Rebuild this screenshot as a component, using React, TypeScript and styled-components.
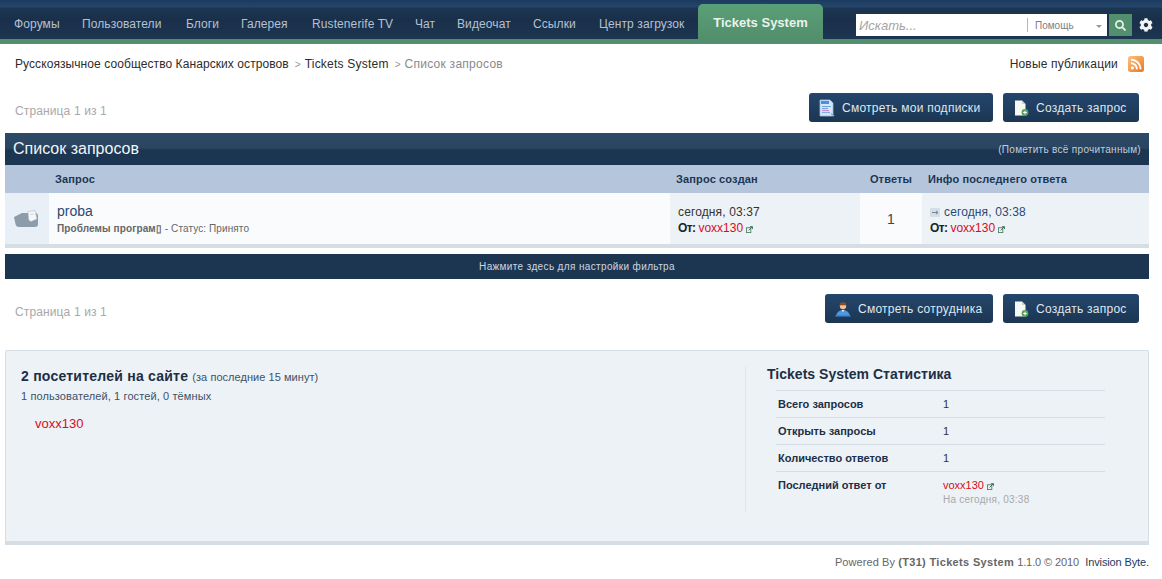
import { ReactNode } from 'react';
import styled, { createGlobalStyle } from 'styled-components';
import { FaCog, FaSearch } from 'react-icons/fa';

const GlobalStyle = createGlobalStyle`
  html, body {
    margin: 0;
    padding: 0;
    background: #fff;
    overflow: hidden;
  }
  body {
    font-family: "Liberation Sans", Arial, sans-serif;
    font-size: 12px;
    color: #333;
  }
`;

const navItems = [
  ['Форумы', 46],
  ['Пользователи', 82],
  ['Блоги', 33],
  ['Галерея', 49],
  ['Rustenerife TV', 81],
  ['Чат', 20],
  ['Видеочат', 54],
  ['Ссылки', 44],
  ['Центр загрузок', 87],
] as const;

const Header = styled.header`
  height: 39px;
  border-bottom: 5px solid #528f6c;
  background: linear-gradient(#1d3a5e 0, #24466d 7px, #1c3652 8px, #1a2f49 20px, #1c3652 39px);
  display: flex;
  align-items: flex-start;
`;

const Nav = styled.nav`
  display: flex;
  gap: 22px;
  padding: 17px 0 0 14px;
`;

const NavLink = styled.a<{ $width: number }>`
  width: ${p => p.$width}px;
  color: #b3c2d2;
  font-size: 12px;
  line-height: 14px;
  white-space: nowrap;
  letter-spacing: 0.1px;
`;

const ActiveTab = styled.a`
  margin: 4px 0 0 12px;
  width: 125px;
  height: 35px;
  box-sizing: border-box;
  padding-top: 11px;
  border-radius: 5px 5px 0 0;
  background: linear-gradient(#5a9f78, #528f6c);
  color: #e9f3ec;
  font-size: 13px;
  line-height: 15px;
  font-weight: bold;
  text-align: center;
`;

const SearchArea = styled.div`
  margin: 14px 0 0 33px;
  display: flex;
  align-items: center;
`;

const SearchBox = styled.div`
  width: 251px;
  height: 22px;
  background: #fff;
  display: flex;
  align-items: center;
  position: relative;
`;

const SearchHint = styled.span`
  flex: 1;
  padding-left: 3px;
  font-size: 13px;
  font-style: italic;
  color: #a4a4a4;
`;

const SearchScope = styled.span`
  width: 80px;
  height: 14px;
  border-left: 1px solid #b5b5b5;
  padding-left: 7px;
  box-sizing: border-box;
  font-size: 10px;
  line-height: 16px;
  color: #7d7d7d;
`;

const Caret = styled.i`
  position: absolute;
  right: 5px;
  top: 11px;
  border: 3px solid transparent;
  border-top: 3px solid #999;
  border-bottom: 0;
`;

const SearchButton = styled.button`
  width: 23px;
  height: 22px;
  margin-left: 2px;
  padding: 0;
  border: 0;
  background: #528f6c;
  color: #e6f0ea;
  display: flex;
  align-items: center;
  justify-content: center;
  font-size: 11px;
`;

const SettingsIcon = styled(FaCog)`
  margin-left: 7px;
  color: #f1f3f5;
  font-size: 14px;
`;

const Breadcrumb = styled.div`
  height: 40px;
  padding: 0 18px 0 15px;
  display: flex;
  align-items: center;
  font-size: 12px;
  color: #333;
`;

const Crumb = styled.span<{ $muted?: boolean; $spacing: number }>`
  color: ${p => (p.$muted ? '#8a8a8a' : '#2c2c2c')};
  letter-spacing: ${p => p.$spacing}px;
  margin-right: 3px;
`;

const Separator = styled.span`
  color: #999;
  font-size: 10px;
  margin: 0 4px 0 3px;
`;

const NewPosts = styled.a`
  margin-left: auto;
  color: #2c2c2c;
  letter-spacing: 0.18px;
  display: flex;
  align-items: center;
  gap: 10px;
`;

const ActionRow = styled.div<{ $top: number; $bottom: number }>`
  display: flex;
  align-items: center;
  padding: ${p => p.$top}px 23px ${p => p.$bottom}px 15px;
  gap: 10px;
`;

const PageInfo = styled.span`
  margin-right: auto;
  padding-top: 6px;
  color: #a8a8a8;
  font-size: 12px;
  letter-spacing: 0.13px;
`;

const ActionButton = styled.a<{ $width: number }>`
  width: ${p => p.$width}px;
  height: 29px;
  box-sizing: border-box;
  padding-left: 10px;
  border-radius: 3px;
  background: linear-gradient(#24466d, #1c3652);
  color: #dfe7ef;
  display: flex;
  align-items: center;
  gap: 7px;
  font-size: 12px;
  letter-spacing: 0.26px;
  white-space: nowrap;
`;

const Main = styled.main`
  margin: 0 13px 0 5px;
`;

const TitleBar = styled.div`
  height: 32px;
  padding: 0 8px;
  background: linear-gradient(#2c4a69 0, #2a4560 15px, #1c3652 17px, #1c3652 100%);
  display: flex;
  align-items: center;
  justify-content: space-between;
`;

const Title = styled.h2`
  margin: 0;
  font-size: 16px;
  font-weight: normal;
  color: #f2f5f8;
`;

const MarkRead = styled.a`
  font-size: 10px;
  color: #c2cdd8;
  letter-spacing: 0.3px;
`;

const columns = '44px 621px 190px 62px 1fr';

const HeadRow = styled.div`
  height: 28px;
  display: grid;
  grid-template-columns: ${columns};
  align-items: center;
  background: #b5c6dc;
  color: #1c3652;
  font-size: 11px;
  font-weight: bold;
  letter-spacing: 0.14px;
`;

const HeadCell = styled.span<{ $center?: boolean; $inset?: number }>`
  padding-left: ${p => p.$inset ?? 0}px;
  text-align: ${p => (p.$center ? 'center' : 'left')};
`;

const TicketRow = styled.div`
  height: 51px;
  display: grid;
  grid-template-columns: ${columns};
  border-bottom: 4px solid #d5dde5;
`;

const Cell = styled.div<{ $tone: 'plain' | 'alt' | 'icon' }>`
  background: ${p => ({ plain: '#f9fbfd', alt: '#edf2f6', icon: '#e9eff6' }[p.$tone])};
  min-width: 0;
  box-sizing: border-box;
`;

const IconCell = styled(Cell)`
  display: flex;
  align-items: center;
  justify-content: center;
  padding-right: 3px;
`;

const TopicCell = styled(Cell)`
  padding: 9px 0 0 8px;
`;

const TopicLink = styled.a`
  display: block;
  font-size: 14px;
  line-height: 18px;
  color: #2a4a75;
`;

const TopicMeta = styled.div`
  margin-top: 3px;
  font-size: 10px;
  line-height: 12px;
  color: #666;
  letter-spacing: 0.1px;
`;

const Strong = styled.strong`
  font-weight: bold;
`;

const InfoCell = styled(Cell)`
  padding: 11px 0 0 8px;
  font-size: 12px;
  line-height: 16px;
  letter-spacing: 0.13px;
  color: #333;
`;

const CountCell = styled(Cell)`
  display: flex;
  align-items: center;
  justify-content: center;
  font-size: 14px;
  color: #444;
`;

const DateLink = styled.a`
  color: #2a4a75;
`;

const UserLine = styled.div`
  display: flex;
  align-items: center;
`;

const UserLink = styled.a`
  color: #d90a1e;
  letter-spacing: 0;
`;

const FromLabel = styled.strong`
  color: #222;
  margin-right: 3px;
  letter-spacing: -0.6px;
`;

const ArrowBadge = styled.span`
  display: inline-flex;
  width: 10px;
  height: 9px;
  margin-right: 4px;
  background: #d5dde5;
  border-radius: 1px;
  vertical-align: -1px;
`;

const FilterBar = styled.div`
  height: 25px;
  margin-top: 6px;
  background: #1c3652;
  color: #ccd6e0;
  font-size: 10px;
  letter-spacing: 0.36px;
  display: flex;
  align-items: center;
  justify-content: center;
`;

const StatsBox = styled.section`
  height: 190px;
  margin-top: 27px;
  border: 1px solid #d5dde5;
  border-bottom: 4px solid #d5dde5;
  border-radius: 2px 2px 0 0;
  background: #edf2f6;
  display: flex;
`;

const ActiveUsers = styled.div`
  width: 740px;
  height: 147px;
  margin-top: 15px;
  box-sizing: border-box;
  padding: 2px 0 0 15px;
  border-right: 1px solid #dfe6ed;
`;

const OnlineTitle = styled.div`
  font-size: 14px;
  line-height: 16px;
  font-weight: bold;
  letter-spacing: 0.23px;
  color: #1d2f45;
`;

const OnlineNote = styled.span`
  font-size: 11px;
  font-weight: normal;
  color: #3d5166;
  letter-spacing: 0.05px;
`;

const OnlineCounts = styled.div`
  margin-top: 5px;
  font-size: 11px;
  line-height: 13px;
  letter-spacing: 0.11px;
  color: #3d5166;
`;

const OnlineUser = styled.a`
  display: block;
  margin: 14px 0 0 14px;
  font-size: 13px;
  line-height: 14px;
  color: #d90a1e;
`;

const StatsColumn = styled.div`
  margin: 15px 0 0 21px;
`;

const StatsTitle = styled.h3`
  margin: 0;
  height: 24px;
  font-size: 14px;
  line-height: 16px;
  font-weight: bold;
  letter-spacing: 0.02px;
  color: #1d2f45;
`;

const StatRow = styled.div`
  width: 329px;
  height: 27px;
  margin-left: 9px;
  border-top: 1px solid #d5dde5;
  display: grid;
  grid-template-columns: 165px 1fr;
  padding-left: 2px;
  box-sizing: border-box;
  padding-top: 7px;
  font-size: 11px;
  line-height: 13px;
  color: #333;
`;

const StatLabel = styled.strong`
  font-weight: bold;
  color: #1d2f45;
`;

const StatUser = styled(UserLink)`
  display: flex;
  align-items: center;
`;

const StatDate = styled.div`
  margin-top: 1px;
  font-size: 10px;
  color: #a8a8a8;
  letter-spacing: 0.25px;
`;

const Footer = styled.footer`
  margin: 11px 13px 0 0;
  text-align: right;
  font-size: 11px;
  line-height: 13px;
  letter-spacing: 0.08px;
  color: #666;
`;

const FooterProduct = styled.strong`
  font-weight: bold;
  letter-spacing: 0.33px;
`;

const FooterVersion = styled.span`
  letter-spacing: -0.1px;
`;

const FooterLink = styled.a`
  margin-left: 3px;
  color: #1c3a5e;
  letter-spacing: -0.12px;
`;

const ExternalMark = styled.svg`
  margin: 2px 0 0 3px;
`;

const ExternalIcon = () => (
  <ExternalMark width="7" height="7" viewBox="0 0 8 8">
    <rect x="0.5" y="2" width="5" height="5.5" fill="none" stroke="#4d7d62" />
    <path d="M3 5 L7 1 M4.5 0.7 H7.4 V3.5" fill="none" stroke="#2e6a4a" />
  </ExternalMark>
);

const RssIcon = () => (
  <svg width="16" height="16" viewBox="0 0 16 16">
    <defs>
      <linearGradient id="rss" x1="0" y1="0" x2="1" y2="1">
        <stop offset="0" stopColor="#fdc184" />
        <stop offset="1" stopColor="#e9781f" />
      </linearGradient>
    </defs>
    <rect width="16" height="16" rx="2.5" fill="url(#rss)" />
    <circle cx="4.4" cy="11.8" r="1.6" fill="#fff" />
    <path d="M3 7.2a6 6 0 0 1 6 6M3 3.6a9.6 9.6 0 0 1 9.6 9.6" fill="none" stroke="#fff" strokeWidth="1.9" />
  </svg>
);

const SubscriptionsIcon = () => (
  <svg width="16" height="18" viewBox="0 0 16 18">
    <path d="M1 1h10l3 3v13H1z" fill="#d5e6f8" stroke="#9bbde2" strokeWidth="0.8" />
    <rect x="2" y="2" width="8" height="3" fill="#4c8fdc" />
    <path d="M3 7.5h9M3 9.5h6" stroke="#6fa3de" strokeWidth="1.1" />
    <path d="M3 11.5h7" stroke="#c88ac0" strokeWidth="1.1" />
    <path d="M3 13.5h8" stroke="#7fb0e4" strokeWidth="1.1" />
    <path d="M12 14.5l3 2.5" stroke="#9aa8b5" strokeWidth="1.5" />
  </svg>
);

const NewTicketIcon = () => (
  <svg width="16" height="16" viewBox="0 0 16 16">
    <path d="M2 0.5h7l3.5 3.5v11.5H2z" fill="#f6f8f4" />
    <path d="M9 0.5V4h3.5z" fill="#c9d0d2" />
    <circle cx="12" cy="12.5" r="3.4" fill="#55a05f" />
    <path d="M10.2 12.5h3.6M12 10.7v3.6" stroke="#fff" strokeWidth="1.1" />
  </svg>
);

const StaffIcon = () => (
  <svg width="16" height="16" viewBox="0 0 16 16">
    <circle cx="8" cy="5" r="3.2" fill="#f0c09a" />
    <path d="M4.6 4.6a3.4 3.4 0 0 1 6.8 0c-2.2-.6-4.4-.3-6.8 0z" fill="#8a4b22" />
    <path d="M1 15c0-1.5 2-6 7-6s7 4.5 7 6z" fill="#4f97de" />
    <path d="M6.5 9l1.5 2 1.5-2z" fill="#f4f7fa" />
    <path d="M0 15.2h16" stroke="#2f6fb5" strokeWidth="1.2" />
  </svg>
);

const TicketIcon = () => (
  <svg width="26" height="20" viewBox="0 0 26 20">
    <path d="M1 8 L9 4 H22 Q25 4 25 7 V15 Q25 18 22 18 H6 Q3 18 2.5 15z" fill="#8d9cab" />
    <path d="M15 2.5 L22 1.5 L24 10 L18 12.5 Q16 12 15.5 10z" fill="#f4f6f8" stroke="#a9b4be" strokeWidth="0.5" />
    <path d="M17.5 5.5l3-.5" stroke="#b6bec6" strokeWidth="0.7" />
  </svg>
);

const Arrow = () => (
  <svg width="10" height="9" viewBox="0 0 10 9">
    <path d="M2 4.5h6M6 2.8l2 1.7-2 1.7" fill="none" stroke="#6b7d8e" strokeWidth="0.9" />
  </svg>
);

const Stat = ({ label, children }: { label: string; children: ReactNode }) => (
  <StatRow>
    <StatLabel>{label}</StatLabel>
    <div>{children}</div>
  </StatRow>
);

const App = () => (
  <>
    <GlobalStyle />
    <Header>
      <Nav>
        {navItems.map(([name, width]) => (
          <NavLink key={name} $width={width}>{name}</NavLink>
        ))}
      </Nav>
      <ActiveTab>Tickets System</ActiveTab>
      <SearchArea>
        <SearchBox>
          <SearchHint>Искать...</SearchHint>
          <SearchScope>Помощь</SearchScope>
          <Caret />
        </SearchBox>
        <SearchButton><FaSearch /></SearchButton>
        <SettingsIcon />
      </SearchArea>
    </Header>

    <Breadcrumb>
      <Crumb $spacing={0.08}>Русскоязычное сообщество Канарских островов</Crumb>
      <Separator>&gt;</Separator>
      <Crumb $spacing={0.22}>Tickets System</Crumb>
      <Separator>&gt;</Separator>
      <Crumb $muted $spacing={0.27}>Список запросов</Crumb>
      <NewPosts>Новые публикации <RssIcon /></NewPosts>
    </Breadcrumb>

    <ActionRow $top={9} $bottom={11}>
      <PageInfo>Страница 1 из 1</PageInfo>
      <ActionButton $width={184}><SubscriptionsIcon />Смотреть мои подписки</ActionButton>
      <ActionButton $width={136}><NewTicketIcon />Создать запрос</ActionButton>
    </ActionRow>

    <Main>
      <TitleBar>
        <Title>Список запросов</Title>
        <MarkRead>(Пометить всё прочитанным)</MarkRead>
      </TitleBar>
      <HeadRow>
        <span />
        <HeadCell $inset={6}>Запрос</HeadCell>
        <HeadCell $inset={6}>Запрос создан</HeadCell>
        <HeadCell $center>Ответы</HeadCell>
        <HeadCell $inset={6}>Инфо последнего ответа</HeadCell>
      </HeadRow>
      <TicketRow>
        <IconCell $tone="icon"><TicketIcon /></IconCell>
        <TopicCell $tone="plain">
          <TopicLink>proba</TopicLink>
          <TopicMeta><Strong>Проблемы програм▯</Strong> - Статус: Принято</TopicMeta>
        </TopicCell>
        <InfoCell $tone="alt">
          <div>сегодня, 03:37</div>
          <UserLine><FromLabel>От:</FromLabel><UserLink>voxx130</UserLink><ExternalIcon /></UserLine>
        </InfoCell>
        <CountCell $tone="plain">1</CountCell>
        <InfoCell $tone="alt">
          <div><ArrowBadge><Arrow /></ArrowBadge><DateLink>сегодня, 03:38</DateLink></div>
          <UserLine><FromLabel>От:</FromLabel><UserLink>voxx130</UserLink><ExternalIcon /></UserLine>
        </InfoCell>
      </TicketRow>
      <FilterBar>Нажмите здесь для настройки фильтра</FilterBar>
    </Main>

    <ActionRow $top={15} $bottom={0}>
      <PageInfo>Страница 1 из 1</PageInfo>
      <ActionButton $width={168}><StaffIcon />Смотреть сотрудника</ActionButton>
      <ActionButton $width={136}><NewTicketIcon />Создать запрос</ActionButton>
    </ActionRow>

    <Main>
      <StatsBox>
        <ActiveUsers>
          <OnlineTitle>2 посетителей на сайте <OnlineNote>(за последние 15 минут)</OnlineNote></OnlineTitle>
          <OnlineCounts>1 пользователей, 1 гостей, 0 тёмных</OnlineCounts>
          <OnlineUser>voxx130</OnlineUser>
        </ActiveUsers>
        <StatsColumn>
          <StatsTitle>Tickets System Статистика</StatsTitle>
          <Stat label="Всего запросов">1</Stat>
          <Stat label="Открыть запросы">1</Stat>
          <Stat label="Количество ответов">1</Stat>
          <Stat label="Последний ответ от">
            <StatUser>voxx130<ExternalIcon /></StatUser>
            <StatDate>На сегодня, 03:38</StatDate>
          </Stat>
        </StatsColumn>
      </StatsBox>
    </Main>

    <Footer>
      Powered By <FooterProduct>(T31) Tickets System</FooterProduct> <FooterVersion>1.1.0 © 2010</FooterVersion> <FooterLink>Invision Byte.</FooterLink>
    </Footer>
  </>
);

export default App;
